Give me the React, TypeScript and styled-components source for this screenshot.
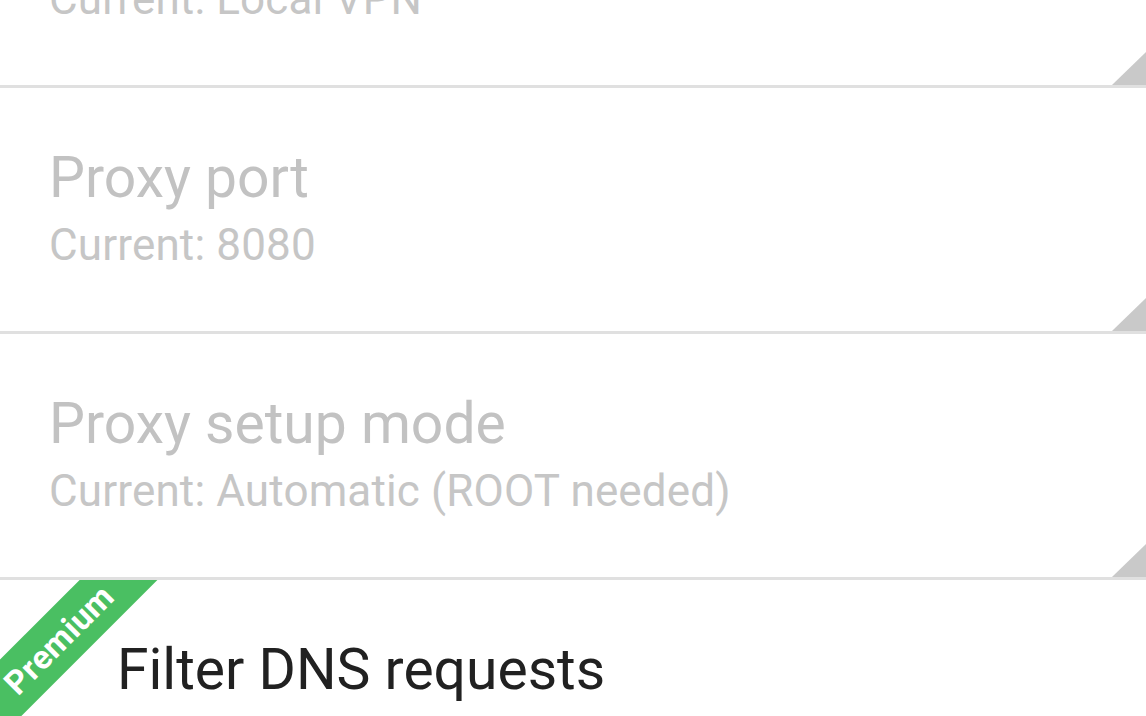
import React from "react";
import styled, { createGlobalStyle } from "styled-components";

const Global = createGlobalStyle`
  html, body { margin: 0; padding: 0; background: #ffffff; overflow: hidden; }
  body { font-family: Roboto, "Noto Sans", "Liberation Sans", sans-serif; }
`;

const Screen = styled.div`
  width: 1146px;
  height: 716px;
  overflow: hidden;
  background: #ffffff;
`;

const List = styled.div`
  display: flex;
  flex-direction: column;
  margin-top: -158px;
`;

const Row = styled.div<{ $inset?: number }>`
  position: relative;
  overflow: hidden;
  box-sizing: border-box;
  height: 246px;
  border-bottom: 3px solid #e0e0e0;
  padding-left: ${(p) => p.$inset ?? 49}px;
  padding-top: 58px;
  display: flex;
  flex-direction: column;
`;

const Title = styled.div<{ $disabled?: boolean }>`
  font-size: 57px;
  line-height: 64px;
  color: ${(p) => (p.$disabled ? "#c2c2c2" : "#212121")};
  white-space: nowrap;
`;

const Summary = styled.div<{ $disabled?: boolean }>`
  margin-top: 11px;
  font-size: 44px;
  line-height: 48px;
  letter-spacing: 0.15px;
  color: ${(p) => (p.$disabled ? "#c6c6c6" : "#757575")};
  white-space: nowrap;
`;

const Corner = styled.div`
  position: absolute;
  right: 0;
  bottom: 0;
  width: 34px;
  height: 33px;
  background: #c9c9c9;
  clip-path: polygon(100% 0, 100% 100%, 0 100%);
`;

const Ribbon = styled.div`
  position: absolute;
  left: -91px;
  top: 32px;
  width: 300px;
  height: 55px;
  background: #4abf62;
  transform: rotate(-45deg);
  display: flex;
  align-items: center;
  justify-content: center;
  color: #ffffff;
  font-weight: 700;
  font-size: 33px;
  letter-spacing: 0.5px;
`;

type Item = { title: string; summary?: string; disabled?: boolean; corner?: boolean; premium?: boolean };

const items: Item[] = [
  { title: "Proxy mode", summary: "Current: Local VPN", disabled: true, corner: true },
  { title: "Proxy port", summary: "Current: 8080", disabled: true, corner: true },
  { title: "Proxy setup mode", summary: "Current: Automatic (ROOT needed)", disabled: true, corner: true },
  { title: "Filter DNS requests", premium: true },
];

export default function App() {
  return (
    <Screen>
      <Global />
      <List>
        {items.map((it) => (
          <Row key={it.title} $inset={it.premium ? 117 : 49}>
            {it.premium && <Ribbon>Premium</Ribbon>}
            <Title $disabled={it.disabled}>{it.title}</Title>
            {it.summary && <Summary $disabled={it.disabled}>{it.summary}</Summary>}
            {it.corner && <Corner />}
          </Row>
        ))}
      </List>
    </Screen>
  );
}
